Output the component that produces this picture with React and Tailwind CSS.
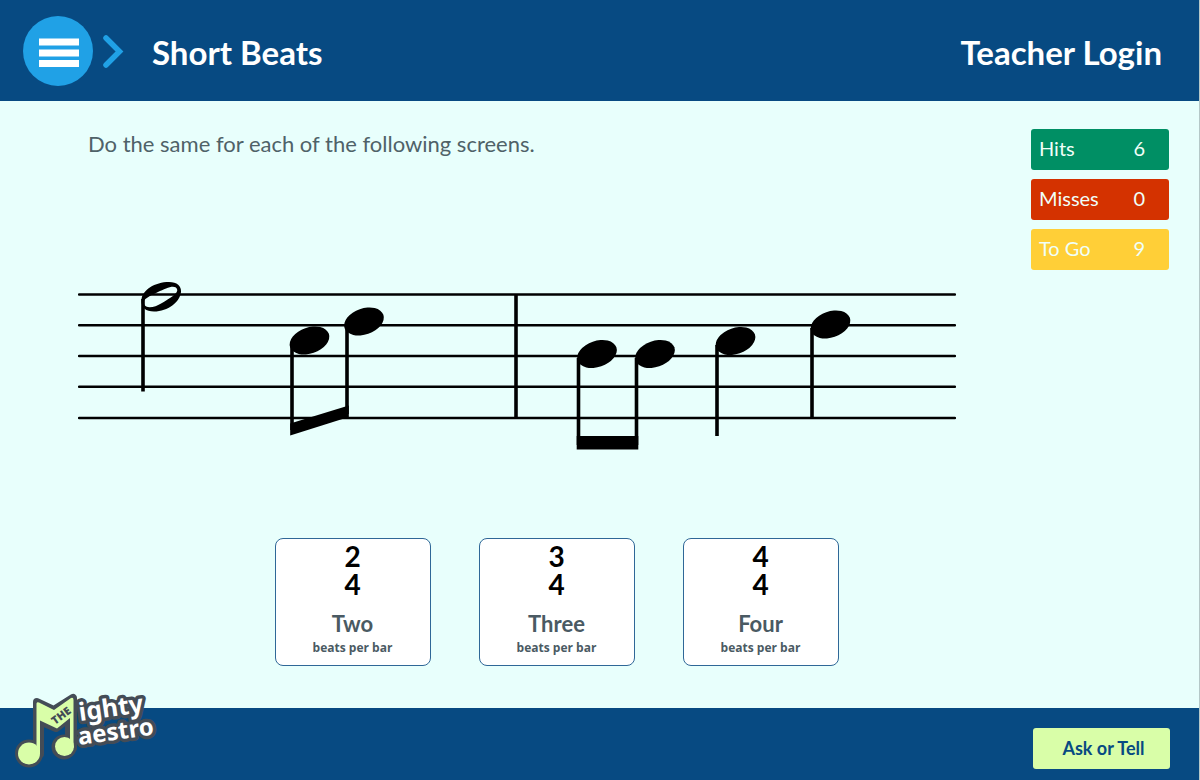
import React, { useState } from "react";

const scores = [
  { label: "Hits", value: 6, color: "bg-[#008f64]" },
  { label: "Misses", value: 0, color: "bg-[#d43200]" },
  { label: "To Go", value: 9, color: "bg-[#ffcf37]" },
];

const answers = [
  { top: 2, bottom: 4, name: "Two" },
  { top: 3, bottom: 4, name: "Three" },
  { top: 4, bottom: 4, name: "Four" },
];

const lines = [14.5, 45.2, 76, 106.8, 138];

function Head({ x, y }) {
  return <ellipse cx={x} cy={y} rx="20.5" ry="13" transform={`rotate(-19 ${x} ${y})`} />;
}

function Staff() {
  return (
    <svg viewBox="0 0 878 172" className="block w-full h-auto" role="img" aria-label="Two bars of music">
      <g stroke="#000" strokeWidth="2.4" strokeLinecap="round">
        {lines.map((y) => (
          <line key={y} x1="1" x2="877" y1={y} y2={y} />
        ))}
      </g>

      <g stroke="#000" strokeWidth="3.6">
        {/* bar line */}
        <path d="M438 14V138" />
        {/* stems */}
        <path d="M65 19V111.500M214 65V150M269 46V134M500.500 78V165M558.500 78V165M639 65V156M734 48V139" />
      </g>

      {/* half note */}
      <path
        fillRule="evenodd"
        d="M63.500 20C64 10 77 2 91 2C99 2 103.500 6 103 12C102 22 90 31.500 76 31.500C68 31.500 63 28 63.500 20ZM66 24C68 29 76 28 84 23C92 18 101 13 99 9C97 4 88 8 80 12C72 16 64 19 66 24Z"
      />

      <Head x={231.5} y={60.5} />
      <Head x={286} y={41.5} />
      <Head x={519} y={74} />
      <Head x={577} y={74} />
      <Head x={657.5} y={61} />
      <Head x={752.5} y={44.5} />

      {/* beams */}
      <path d="M212.200 143.500L270.800 125.500V137L212.200 155.500Z" />
      <path d="M498.700 156H560.300V169.500H498.700Z" />
    </svg>
  );
}

function Logo() {
  return (
    <svg viewBox="0 0 170 100" className="block w-[170px] h-[100px]" role="img" aria-label="The Mighty Maestro">
      <g stroke="#444c56" strokeWidth="8" strokeLinejoin="round" fill="#444c56">
        <path d="M37 22L54 30L73 18V68H69V38L56 48L40 41V74H37Z" />
        <circle cx="29" cy="73.500" r="10" />
        <circle cx="64" cy="67" r="8.500" />
      </g>
      <g fill="#d9fea8">
        <path d="M36.500 23.500Q37 21.500 39 22.500L54 30L71 18Q73.500 17 73.500 20V68H70V38L57 48.500L40 40.500V74H36.500Z" />
        <circle cx="29" cy="73.500" r="11" />
        <circle cx="64.500" cy="66.500" r="9.500" />
      </g>
      <text transform="translate(55 45) rotate(-37)" fontSize="11" fontWeight="800" fill="#444c56" className="font-['Open_Sans']">
        THE
      </text>
      <g
        className="font-['Noto_Sans']"
        fontSize="24"
        fontWeight="700"
        fill="#fff"
        stroke="#444c56"
        strokeWidth="7"
        strokeLinejoin="round"
        paintOrder="stroke"
      >
        <text transform="translate(79 65) rotate(-8)">aestro</text>
        <text transform="translate(80 41) rotate(-8)" fontSize="25">ighty</text>
      </g>
    </svg>
  );
}

export default function App() {
  const [answer, setAnswer] = useState(null);

  return (
    <div className="min-h-screen flex flex-col bg-[#e8fffc] border-r border-[#b5c8c8] font-['Lato',sans-serif]">
      <header className="flex items-center bg-[#074a82] h-[101px] pl-[23px] pr-[37px] text-white text-[33px] font-bold">
        <button aria-label="Menu" className="flex items-center gap-2">
          <svg viewBox="0 0 70 70" className="w-[70px] h-[70px]">
            <circle cx="35" cy="35" r="35" fill="#20a1e6" />
            <path d="M16 22.500H56V29.500H16ZM16 33.500H56V40.500H16ZM16 44H56V51H16Z" fill="#fff" />
          </svg>
          <svg viewBox="0 0 24 36" className="w-6 h-9" fill="none" stroke="#20a1e6" strokeWidth="5.500" strokeLinecap="round">
            <path d="M5 5L18.500 18.500L5 32" />
          </svg>
        </button>
        <h1 className="ml-[27px] pt-1">Short Beats</h1>
        <a href="#login" className="ml-auto pt-1">Teacher Login</a>
      </header>

      <main className="flex flex-1 items-start gap-[75px] pl-[78px] pr-[30px] pt-7 pb-10">
        <section className="flex-1">
          <p className="pl-[10px] text-[22px] leading-[30px] text-[#4f6268]">Do the same for each of the following screens.</p>

          <div className="mt-[121px]">
            <Staff />
          </div>

          <div className="flex justify-center gap-12 pl-[79px] mt-[86px]">
            {answers.map((a) => (
              <button
                key={a.name}
                onClick={() => setAnswer(a.name)}
                aria-pressed={answer === a.name}
                className="w-[156px] h-32 flex flex-col items-center pt-[3px] rounded-lg border border-[#2f6797] bg-white font-bold text-[#4a5a63]"
              >
                <span className="text-[28px] leading-7 text-black">{a.top}</span>
                <span className="text-[28px] leading-7 text-black">{a.bottom}</span>
                <span className="mt-2.5 text-[22px] leading-8">{a.name}</span>
                <span className="text-xs font-bold font-['Open_Sans',sans-serif]">beats per bar</span>
              </button>
            ))}
          </div>
        </section>

        <aside className="flex flex-col gap-[9px] w-[138px]">
          {scores.map((s) => (
            <div key={s.label} className={`flex items-center justify-between h-[41px] pl-2 pr-6 pb-[3px] rounded-[3px] text-xl text-[#f0fff8] ${s.color}`}>
              <span>{s.label}</span>
              <span>{s.value}</span>
            </div>
          ))}
        </aside>
      </main>

      <footer className="relative flex items-center justify-end h-[72px] pt-2 pr-[29px] bg-[#074a82]">
        <div className="absolute left-0 bottom-0">
          <Logo />
        </div>
        <button className="w-[137px] h-[41px] pl-1 rounded-[3px] bg-[#d9fea8] text-lg font-bold text-[#074a82]">
          Ask or Tell
        </button>
      </footer>
    </div>
  );
}
